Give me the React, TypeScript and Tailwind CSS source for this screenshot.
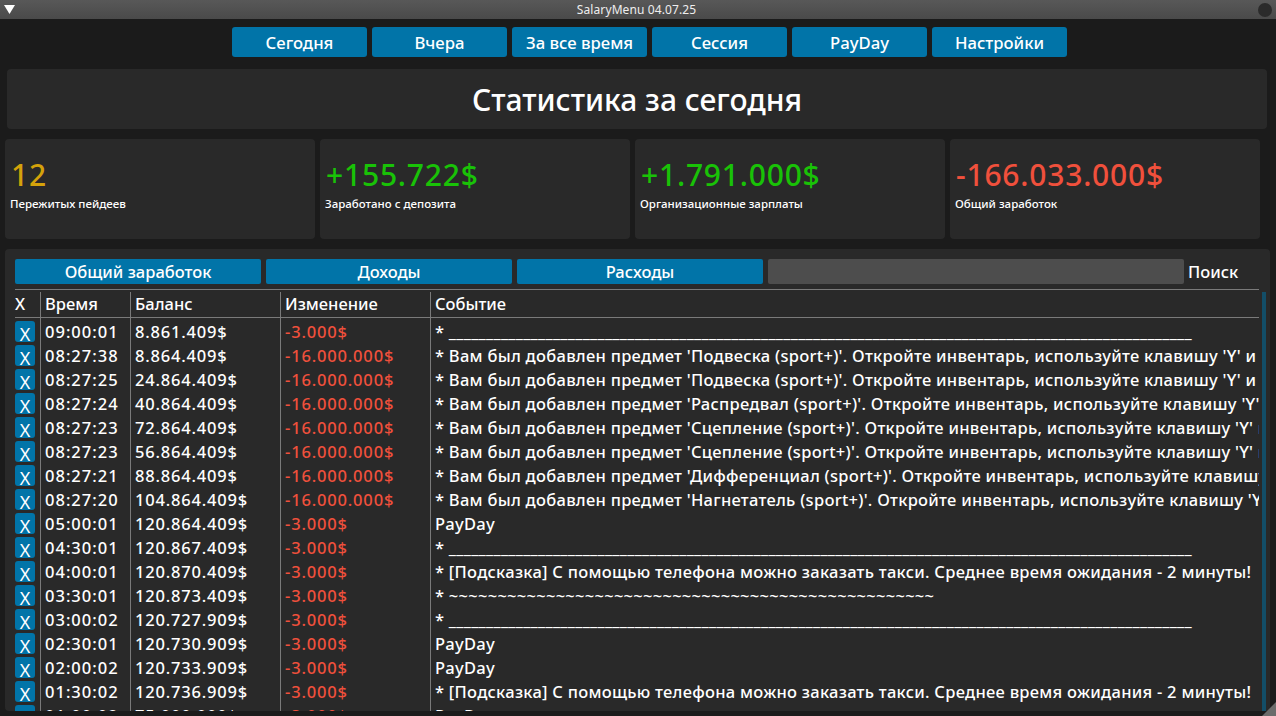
import React from 'react';

const rule = '_'.repeat(100);

const rows: [string, string, string, string][] = [
  ['09:00:01', '8.861.409$', '-3.000$', '* ' + rule],
  ['08:27:38', '8.864.409$', '-16.000.000$', "* Вам был добавлен предмет 'Подвеска (sport+)'. Откройте инвентарь, используйте клавишу 'Y' и нажмите"],
  ['08:27:25', '24.864.409$', '-16.000.000$', "* Вам был добавлен предмет 'Подвеска (sport+)'. Откройте инвентарь, используйте клавишу 'Y' и нажмите"],
  ['08:27:24', '40.864.409$', '-16.000.000$', "* Вам был добавлен предмет 'Распредвал (sport+)'. Откройте инвентарь, используйте клавишу 'Y' и нажмите"],
  ['08:27:23', '72.864.409$', '-16.000.000$', "* Вам был добавлен предмет 'Сцепление (sport+)'. Откройте инвентарь, используйте клавишу 'Y' и нажмите"],
  ['08:27:23', '56.864.409$', '-16.000.000$', "* Вам был добавлен предмет 'Сцепление (sport+)'. Откройте инвентарь, используйте клавишу 'Y' и нажмите"],
  ['08:27:21', '88.864.409$', '-16.000.000$', "* Вам был добавлен предмет 'Дифференциал (sport+)'. Откройте инвентарь, используйте клавишу 'Y' и нажмите"],
  ['08:27:20', '104.864.409$', '-16.000.000$', "* Вам был добавлен предмет 'Нагнетатель (sport+)'. Откройте инвентарь, используйте клавишу 'Y' и нажмите"],
  ['05:00:01', '120.864.409$', '-3.000$', 'PayDay'],
  ['04:30:01', '120.867.409$', '-3.000$', '* ' + rule],
  ['04:00:01', '120.870.409$', '-3.000$', '* [Подсказка] С помощью телефона можно заказать такси. Среднее время ожидания - 2 минуты!'],
  ['03:30:01', '120.873.409$', '-3.000$', '* ' + '~'.repeat(50)],
  ['03:00:02', '120.727.909$', '-3.000$', '* ' + rule],
  ['02:30:01', '120.730.909$', '-3.000$', 'PayDay'],
  ['02:00:02', '120.733.909$', '-3.000$', 'PayDay'],
  ['01:30:02', '120.736.909$', '-3.000$', '* [Подсказка] С помощью телефона можно заказать такси. Среднее время ожидания - 2 минуты!'],
  ['01:00:02', '75.000.000$', '-3.000$', 'PayDay'],
];

const tabs = ['Сегодня', 'Вчера', 'За все время', 'Сессия', 'PayDay', 'Настройки'];

const cards = [
  { value: '12', label: 'Пережитых пейдеев', color: 'text-[#d4a20a]' },
  { value: '+155.722$', label: 'Заработано с депозита', color: 'text-[#19c207]' },
  { value: '+1.791.000$', label: 'Организационные зарплаты', color: 'text-[#19c207]' },
  { value: '-166.033.000$', label: 'Общий заработок', color: 'text-[#f0503c]' },
];

const App: React.FC = () => {
  return (
    <div className="w-[1276px] h-[716px] relative overflow-hidden bg-[#1b1b1b] text-white font-['Noto_Sans',sans-serif] flex flex-col">
      {/* title bar */}
      <div className="h-[19px] shrink-0 bg-gradient-to-b from-[#585858] to-[#4a4a4a] flex items-center justify-between pl-1 pr-1">
        <svg width="11" height="10" viewBox="0 0 11 10" className="mb-[2px]">
          <polygon points="0,1 11,1 5.5,10" fill="#ffffff" />
        </svg>
        <span className="text-[12px] leading-[19px] text-[#eeeeee] tracking-[0.1px]">SalaryMenu 04.07.25</span>
        <div className="w-[14px] h-[14px] rounded-full bg-[#2b2b2b]" />
      </div>

      {/* tabs */}
      <div className="mt-2 ml-[232px] flex gap-[5px]">
        {tabs.map((t) => (
          <div key={t} className="w-[135px] h-[30px] pt-[1px] rounded-[3px] bg-[#0174a8] flex items-center justify-center text-[16.7px] font-medium">
            {t}
          </div>
        ))}
      </div>

      <div className="mt-3 ml-[7px] w-[1260px] h-[60px] rounded-[4px] bg-[#292929] flex items-center justify-center text-[30px] font-medium">
        Статистика за сегодня
      </div>

      {/* stat cards */}
      <div className="mt-[10px] ml-[5px] flex gap-[5px]">
        {cards.map((c) => (
          <div key={c.label} className="w-[310px] h-[100px] rounded-[4px] bg-[#292929] pl-[5px]">
            <div className={`mt-[17px] pl-[1px] text-[30px] leading-[38px] font-medium tracking-[0.8px] ${c.color}`}>{c.value}</div>
            <div className="mt-[2px] text-[11.5px] leading-[16px] font-medium">{c.label}</div>
          </div>
        ))}
      </div>

      {/* log panel */}
      <div className="mt-[10px] ml-[5px] w-[1265px] h-[462px] rounded-[4px] bg-[#292929] relative overflow-hidden pt-[10px] pl-[10px]">
        <div className="flex gap-[5px] h-[25px] items-center">
          {['Общий заработок', 'Доходы', 'Расходы'].map((t) => (
            <div key={t} className="w-[246px] h-[25px] pt-[1px] rounded-[2px] bg-[#0174a8] flex items-center justify-center text-[16.5px] font-medium">
              {t}
            </div>
          ))}
          <div className="w-[416px] h-[25px] rounded-[2px] bg-[#4d4d4d]" />
          <span className="-ml-[1px] pt-[1px] text-[16.5px] font-medium">Поиск</span>
        </div>

        <div className="mt-[5px] w-[1244px] border-t border-[#7a7a7a]">
          {/* header */}
          <div className="flex h-[28px] border-b border-[#7a7a7a] text-[16.5px] font-medium">
            <div className="w-[26px] h-[25px] mt-[2px] border-r border-[#7a7a7a] leading-[23px]">X</div>
            <div className="w-[90px] h-[25px] mt-[2px] border-r border-[#7a7a7a] pl-[4px] leading-[23px]">Время</div>
            <div className="w-[150px] h-[25px] mt-[2px] border-r border-[#7a7a7a] pl-[4px] leading-[23px]">Баланс</div>
            <div className="w-[150px] h-[25px] mt-[2px] border-r border-[#7a7a7a] pl-[4px] leading-[23px]">Изменение</div>
            <div className="flex-1 h-[25px] mt-[2px] pl-[4px] leading-[23px]">Событие</div>
          </div>

          {/* rows */}
          <div className="flex h-[394px] overflow-hidden text-[16.5px] font-medium leading-[24px]">
            <div className="w-[26px] border-r border-[#7a7a7a] shrink-0 pt-[3px]">
              {rows.map((r, i) => (
                <div key={i} className="h-[24px]">
                  <div className="w-[20px] h-[21px] rounded-[3px] bg-[#0174a8] flex items-end justify-center text-[18px] leading-[16px] font-normal">
                    X
                  </div>
                </div>
              ))}
            </div>
            <div className="w-[90px] border-r border-[#7a7a7a] shrink-0 pl-[4px] pt-[2px] tracking-[1px]">
              {rows.map((r, i) => <div key={i}>{r[0]}</div>)}
            </div>
            <div className="w-[150px] border-r border-[#7a7a7a] shrink-0 pl-[4px] pt-[2px] tracking-[0.8px]">
              {rows.map((r, i) => <div key={i}>{r[1]}</div>)}
            </div>
            <div className="w-[150px] border-r border-[#7a7a7a] shrink-0 pl-[4px] pt-[2px] tracking-[0.83px] text-[#f0503c]">
              {rows.map((r, i) => <div key={i}>{r[2]}</div>)}
            </div>
            <div className="w-[828px] shrink-0 pl-[4px] pt-[2px] tracking-[0.27px] overflow-hidden whitespace-nowrap">
              {rows.map((r, i) => <div key={i}>{r[3]}</div>)}
            </div>
          </div>
        </div>

        {/* scrollbar */}
        <div className="absolute right-[4px] top-[43px] bottom-0 w-[4px] bg-[#134e68]" />
      </div>

      {/* resize grip */}
      <div className="absolute right-0 bottom-0 w-0 h-0 border-l-[14px] border-l-transparent border-b-[14px] border-b-[#6b6b6b]" />
    </div>
  );
};

export default App;
